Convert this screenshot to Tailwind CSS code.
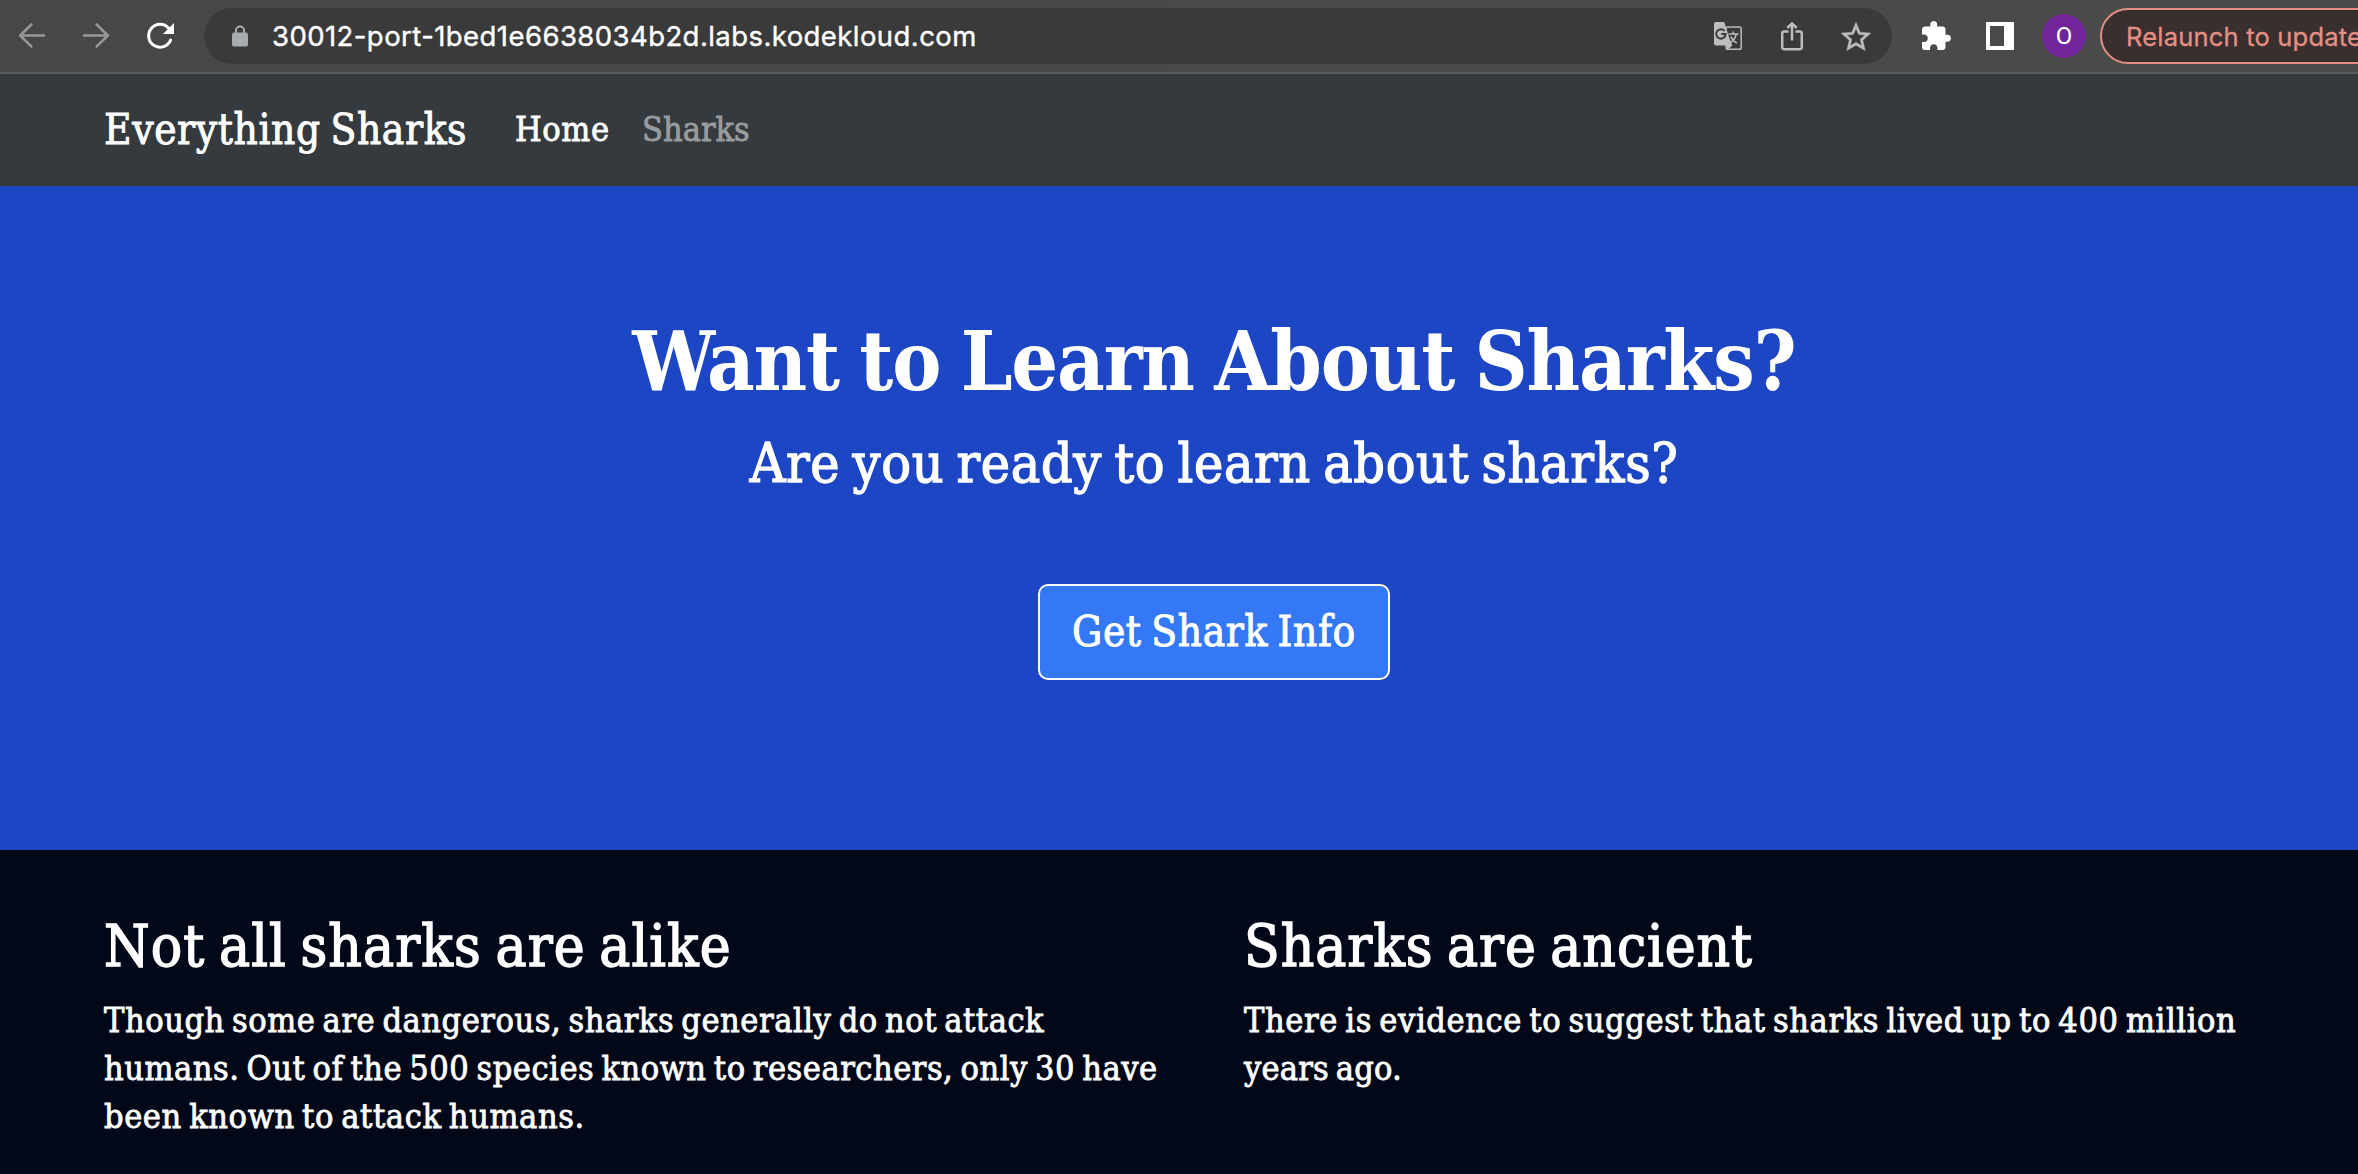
<!DOCTYPE html>
<html lang="en">
<head>
<meta charset="utf-8">
<title>Everything Sharks</title>
<script src="https://cdn.jsdelivr.net/npm/@tailwindcss/browser@4"></script>
</head>
<body class="h-[1174px] w-[2358px] overflow-hidden bg-[#020817] font-['DejaVu_Serif_Condensed','DejaVu_Serif',serif] text-white">

<!-- Browser toolbar -->
<header class="flex h-[74px] items-start overflow-hidden border-b-2 border-[#5b5b5b] bg-linear-to-r from-[#474747] to-[#4b4b4b] pt-2 font-['Inter',sans-serif]">
  <div class="flex h-14 w-[204px] shrink-0 items-center pl-[18px]">
    <svg class="h-7 w-7" viewBox="0 0 28 28" fill="none" stroke="#989898" stroke-width="2.5" stroke-linecap="round" stroke-linejoin="round"><path d="M26 13.5H2.5M13.500 2.300L2.200 13.500l11.300 11.200"/></svg>
    <svg class="ml-9 h-7 w-7" viewBox="0 0 28 28" fill="none" stroke="#989898" stroke-width="2.5" stroke-linecap="round" stroke-linejoin="round"><path d="M2 13.500H26M14.500 2.300l11.300 11.200-11.300 11.200"/></svg>
    <svg class="ml-9 h-7 w-7" viewBox="0 0 28 28"><path d="M22.600 6.200A11.400 11.400 0 1 0 24.600 18.100" fill="none" stroke="#fff" stroke-width="3" stroke-linecap="round"/><path d="M28 1v11H17z" fill="#fff"/></svg>
  </div>
  <div class="flex h-14 w-[1688px] shrink-0 items-center rounded-full bg-[#3a3a3a] pr-[21px] pl-7">
    <svg class="h-[22px] w-4" viewBox="0 0 16 22"><path d="M4 9V5.500a4 4 0 0 1 8 0V9" fill="none" stroke="#a7acb1" stroke-width="2"/><rect y="7.500" width="16" height="14" rx="2" fill="#a7acb1"/></svg>
    <span class="ml-6 pt-0.5 text-[27.500px] leading-none tracking-[0.43px] whitespace-nowrap [-webkit-text-stroke:0.4px]">30012-port-1bed1e6638034b2d.labs.kodekloud.com</span>
    <div class="ml-auto flex items-center">
      <svg class="h-7 w-7" viewBox="0 0 28 28">
        <rect x="12" y="5" width="15.200" height="22.200" rx="1.800" fill="none" stroke="#bdbdbd" stroke-width="1.500"/>
        <path d="M2 0h8.300l1.200 3.800 3.700 12L18.300 23.500 13.500 28l-1.500-4.500H2a2 2 0 0 1-2-2V2a2 2 0 0 1 2-2z" fill="#bdbdbd"/>
        <path d="M10.600 9a4.700 4.700 0 1 0 1 3H7.300" fill="none" stroke="#3a3a3a" stroke-width="2"/>
        <path d="M14.500 12h10M19.200 9.500V12M22.300 12c-.8 4-3.500 7.300-6.500 9M16.800 14.500c1.200 3 3.500 5.300 6.200 6.700" fill="none" stroke="#bdbdbd" stroke-width="1.500"/>
      </svg>
      <svg class="ml-[39px] h-[30px] w-[22px]" viewBox="0 0 22 30" fill="none" stroke="#bdbdbd" stroke-width="2.500" stroke-linejoin="round"><path d="M7.500 10.500H3.200a2 2 0 0 0-2 2v13.800a2 2 0 0 0 2 2h15.600a2 2 0 0 0 2-2V12.500a2 2 0 0 0-2-2h-4.300M11 19.500V2.500M6.300 7L11 2.300 15.700 7"/></svg>
      <svg class="ml-[38px] h-[29px] w-[30px]" viewBox="2 2 20 19" fill="#bdbdbd" stroke="#bdbdbd" stroke-width="0.250"><path d="M22 9.240l-7.190-.62L12 2 9.190 8.630 2 9.240l5.460 4.730L5.820 21 12 17.270 18.180 21l-1.630-7.030L22 9.240zM12 15.400l-3.760 2.270 1-4.280-3.320-2.880 4.380-.38L12 6.100l1.710 4.040 4.380.38-3.320 2.880 1 4.280L12 15.400z"/></svg>
    </div>
  </div>
  <div class="flex h-14 shrink-0 items-center pl-[30px]">
    <svg class="mb-0.5 h-[29px] w-[29px]" viewBox="2 1 21 21" fill="#fff"><path d="M20.500 11H19V7c0-1.100-.9-2-2-2h-4V3.500C13 2.120 11.880 1 10.500 1S8 2.120 8 3.500V5H4c-1.100 0-1.990.9-1.990 2v3.800H3.500c1.490 0 2.700 1.210 2.700 2.700s-1.210 2.700-2.700 2.700H2V20c0 1.100.9 2 2 2h3.800v-1.500c0-1.490 1.210-2.700 2.700-2.700 1.490 0 2.700 1.210 2.700 2.700V22H17c1.100 0 2-.9 2-2v-4h1.500c1.380 0 2.500-1.120 2.500-2.500S21.880 11 20.500 11z"/></svg>
    <div class="ml-[35px] h-7 w-7 border-4 border-r-[10px] border-white"></div>
    <div class="ml-7 flex h-11 w-11 items-center justify-center rounded-full bg-[#70259b] font-['Roboto',sans-serif] text-2xl leading-none">O</div>
    <div class="ml-[14px] flex h-14 w-[340px] shrink-0 items-center rounded-full border-2 border-[#e58f84] bg-[#392f2e] pt-0.5 pl-6 text-[25.500px] leading-none tracking-[0.2px] whitespace-nowrap text-[#e58f84] [-webkit-text-stroke:0.3px]">Relaunch to update</div>
  </div>
</header>

<!-- Site page: wider than the window, clipped at the right -->
<main class="w-[2428px]">
  <nav class="bg-[#343a3d]">
    <div class="mx-auto flex h-28 w-[2280px] items-center px-[30px]">
      <a class="w-[411px] text-[42px] leading-none tracking-[0.600px] whitespace-nowrap [word-spacing:-3px] [-webkit-text-stroke:0.9px]">Everything Sharks</a>
      <a class="w-[127px] pb-0.5 text-[34px] leading-none tracking-[0.600px] [-webkit-text-stroke:0.8px]">Home</a>
      <a class="pb-0.5 text-[34px] leading-none text-[#999c9e] [-webkit-text-stroke:0.8px]">Sharks</a>
    </div>
  </nav>

  <section class="flex h-[664px] flex-col items-center bg-[#1d46c5] pt-[127px]">
    <h1 class="mb-[21px] text-[82px] leading-[96px] font-bold tracking-[-1.200px] whitespace-nowrap [word-spacing:-4px]">Want to Learn About Sharks?</h1>
    <p class="mb-[88px] text-[55px] leading-[66px] tracking-[0.650px] whitespace-nowrap [word-spacing:-4px] [-webkit-text-stroke:1.300px]">Are you ready to learn about sharks?</p>
    <a class="flex h-24 w-[352px] items-center justify-center rounded-[10px] border-2 border-white bg-[#3478f6] text-[42px] leading-none tracking-[0.600px] whitespace-nowrap [word-spacing:-3px] [-webkit-text-stroke:0.9px]">Get Shark Info</a>
  </section>

  <section class="mx-auto grid w-[2280px] grid-cols-2 pt-[61px]">
    <div class="px-[30px]">
      <h3 class="mb-[15px] text-[58px] leading-[70px] tracking-[1.100px] [word-spacing:-4px] [-webkit-text-stroke:1.400px]">Not all sharks are alike</h3>
      <p class="text-[34px] leading-[48px] tracking-[0.520px] whitespace-nowrap [word-spacing:-3px] [-webkit-text-stroke:0.8px]"><span class="tracking-[0.540px]">Though some are dangerous, sharks generally do not attack</span><br>humans. Out of the 500 species known to researchers, only 30 have<br><span class="tracking-[0.600px]">been known to attack humans.</span></p>
    </div>
    <div class="px-[30px]">
      <h3 class="mb-[15px] text-[58px] leading-[70px] tracking-[0.950px] [word-spacing:-4px] [-webkit-text-stroke:1.400px]">Sharks are ancient</h3>
      <p class="text-[34px] leading-[48px] tracking-[0.200px] whitespace-nowrap [word-spacing:-3px] [-webkit-text-stroke:0.8px]"><span class="tracking-[0.610px]">There is evidence to suggest that sharks lived up to 400 million</span><br>years ago.</p>
    </div>
  </section>
</main>
</body>
</html>
